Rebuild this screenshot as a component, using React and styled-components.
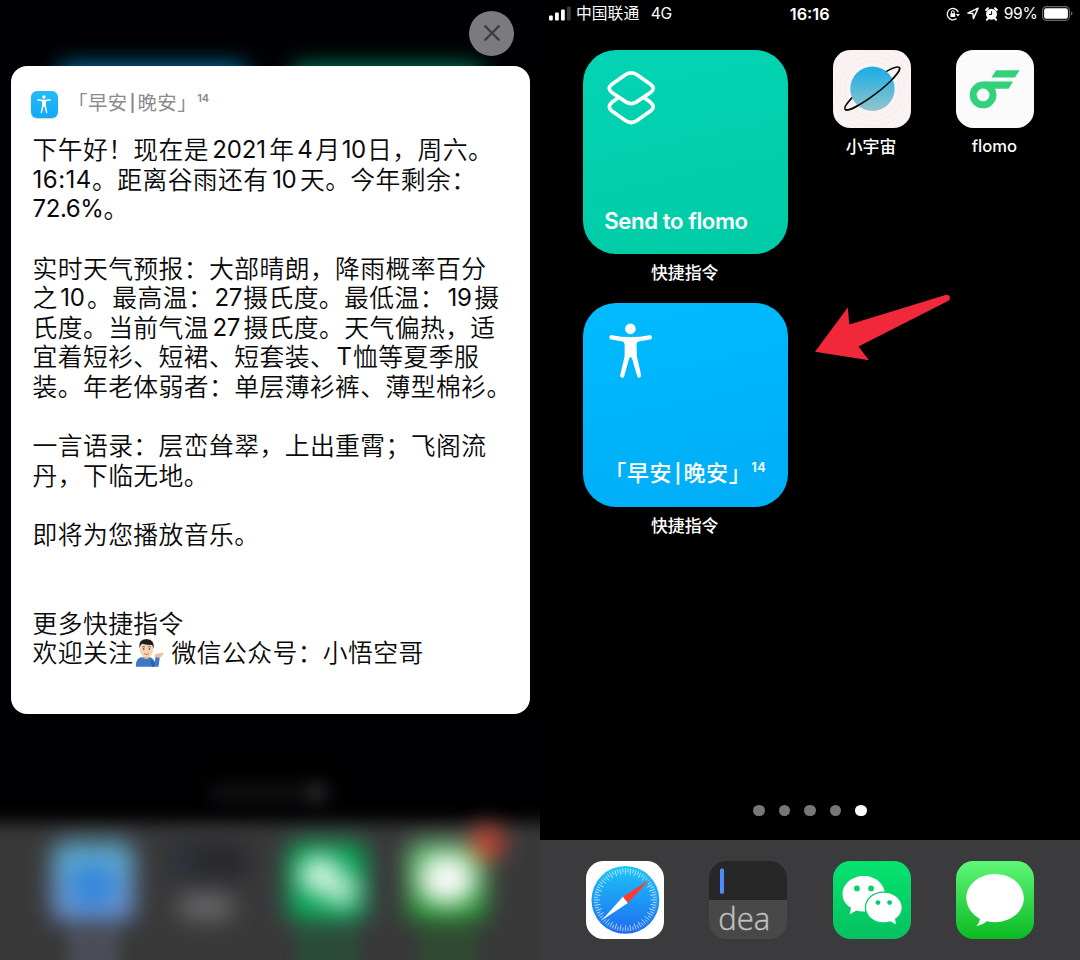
import React from "react";
import styled, { createGlobalStyle } from "styled-components";

const CJK = `"Inter", "Noto Sans CJK SC", sans-serif`;

const GlobalStyle = createGlobalStyle`
  *, *::before, *::after { box-sizing: border-box; }
  body { margin: 0; background: #000; font-family: ${CJK}; }
  svg { display: block; flex: none; }
`;

const Page = styled.main`
  width: 1080px;
  height: 960px;
  display: grid;
  grid-template-columns: 540px 540px;
  overflow: hidden;
  background: #000;
`;

/* ---------- notification phone ---------- */

const AlertPhone = styled.section`
  display: grid;
  height: 960px;
  overflow: hidden;
  & > * { grid-area: 1 / 1; min-width: 0; }
`;

const Backdrop = styled.svg`
  width: 540px;
  height: 960px;
`;

const AlertLayer = styled.div`
  z-index: 1;
  display: flex;
  flex-direction: column;
  align-items: center;
  padding-top: 10.5px;
`;

const CloseButton = styled.button`
  width: 45px;
  height: 45px;
  padding: 0;
  border: 0;
  border-radius: 50%;
  margin: 0 26px 10px auto;
  display: grid;
  place-items: center;
  background: #7b7b7d;
`;

const Card = styled.article`
  width: 519px;
  height: 648.5px;
  border-radius: 16px;
  background: #fff;
  padding: 22px 0 0 22px;
`;

const CardHeader = styled.header`
  display: flex;
  align-items: flex-start;
  height: 30.5px;
  margin-left: -1.5px;
  gap: 10.5px;
`;

const MiniIcon = styled.span`
  width: 26.5px;
  height: 27px;
  border-radius: 6px;
  margin-top: 3.5px;
  display: grid;
  place-items: center;
  background: linear-gradient(#23bdfb, #10a9f5);
  box-shadow: 0 1px 1.5px rgba(0, 0, 0, 0.2);
`;

const ShortcutTitle = styled.span`
  display: flex;
  font-size: ${(p) => p.$size}px;
  font-weight: ${(p) => p.$weight};
  letter-spacing: ${(p) => p.$track}px;
  line-height: 1.45;
  white-space: nowrap;
  color: ${(p) => p.$color};
  font-family: "Noto Sans CJK SC", sans-serif;
`;

const TitleBar = styled.span`
  width: ${(p) => p.$w}px;
  text-align: center;
  letter-spacing: 0;
  font-size: 0.86em;
  font-weight: 600;
  line-height: 1.85;
  font-family: Inter, sans-serif;
`;

const Sup = styled.sup`
  font-family: Inter, sans-serif;
  font-weight: 600;
  letter-spacing: 0;
  font-size: ${(p) => p.$size}px;
  line-height: 1;
  padding-top: ${(p) => p.$top}px;
`;

const Message = styled.div`
  margin-top: 18.2px;
  display: flex;
  flex-direction: column;
`;

const Line = styled.p`
  margin: 0;
  height: 29.6px;
  display: flex;
  align-items: flex-start;
  white-space: nowrap;
  font-family: "Liberation Sans", "Noto Sans CJK SC", sans-serif;
  font-size: 24.8px;
  font-weight: 350;
  line-height: 29.6px;
  letter-spacing: 0.42px;
  color: #0a0a0a;
`;

const Latin = styled.span`
  width: ${(p) => p.$w}px;
  margin-top: -1px;
  text-align: ${(p) => p.$align || "center"};
  font-family: Inter, sans-serif;
  font-size: 24px;
  font-weight: 400;
  letter-spacing: ${(p) => p.$track ?? -0.4}px;
`;

const EmojiSlot = styled.span`
  width: 38.2px;
  padding: 0 0 0 1.4px;
  margin-top: -1.6px;
`;

/* ---------- home-screen phone ---------- */

const HomePhone = styled.section`
  position: relative;
  display: flex;
  flex-direction: column;
  height: 960px;
  color: #fff;
`;

const StatusBar = styled.div`
  height: 28px;
  flex: none;
  display: grid;
  grid-template-columns: 1fr auto 1fr;
  align-items: center;
  padding: 0 7.5px 1px 8.5px;
  font-size: 16px;
`;

const StatusGroup = styled.div`
  display: flex;
  align-items: center;
  justify-content: ${(p) => p.$justify || "flex-start"};
`;

const Carrier = styled.span`
  font-family: "Noto Sans CJK SC", sans-serif;
  font-size: 15.8px;
  line-height: 20px;
  margin: -1px 0 0 4.5px;
`;

const Network = styled.span`
  font-size: 15.6px;
  margin-left: 11.5px;
  letter-spacing: -0.2px;
`;

const Clock = styled.time`
  font-weight: 600;
  font-size: 16.3px;
  margin-right: 1.6px;
`;

const Percent = styled.span`
  font-size: 15.6px;
  letter-spacing: -0.3px;
  margin: 0 4px 0 6px;
`;

const HomeBody = styled.div`
  flex: 1;
  display: flex;
  align-items: flex-start;
  padding: 21.6px 0 0 43.3px;
  gap: 45px;
`;

const WidgetColumn = styled.div`
  display: flex;
  flex-direction: column;
  width: 204.4px;
`;

const WidgetItem = styled.div`
  height: 253.1px;
  display: flex;
  flex-direction: column;
  align-items: center;
`;

const Widget = styled.div`
  width: 204.4px;
  height: 204.5px;
  border-radius: 33px;
  display: flex;
  flex-direction: column;
  justify-content: space-between;
  align-items: flex-start;
  padding: 20px 0 ${(p) => p.$bottom}px 21px;
  background: linear-gradient(168deg, ${(p) => p.$from}, ${(p) => p.$to});
`;

const WidgetGlyph = styled.span`
  margin-left: ${(p) => p.$inset}px;
`;

const WidgetName = styled.span`
  font-size: 22.2px;
  font-weight: 600;
  line-height: 30px;
  letter-spacing: -0.42px;
  white-space: nowrap;
`;

const Label = styled.span`
  font-family: ${(p) => (p.$latin ? "Inter" : `"Noto Sans CJK SC"`)}, sans-serif;
  font-size: ${(p) => (p.$latin ? 16.6 : 16.9)}px;
  font-weight: 500;
  line-height: 24px;
  margin: ${(p) => (p.$latin ? 6.4 : 5.9)}px 1.6px 0 0;
`;

const AppRow = styled.div`
  display: flex;
  gap: 45.2px;
`;

const AppItem = styled.div`
  width: 78.2px;
  display: flex;
  flex-direction: column;
  align-items: center;
`;

const IconTile = styled.span`
  width: 78.2px;
  height: 78.2px;
  border-radius: 17.5px;
  overflow: hidden;
  display: block;
`;

const Pager = styled.div`
  display: flex;
  justify-content: center;
  gap: 14px;
  height: 35.4px;
`;

const Dot = styled.i`
  width: 11.6px;
  height: 11.6px;
  border-radius: 50%;
  background: ${(p) => (p.$active ? "#fff" : "#77777a")};
`;

const Dock = styled.nav`
  height: 120px;
  flex: none;
  display: flex;
  justify-content: space-between;
  padding: 21px 45.6px 0;
  background: #3b3b3d;
`;

const Pointer = styled.svg`
  position: absolute;
  left: 270px;
  top: 288px;
`;

/* ---------- drawings ---------- */

function Person({ w, h }) {
  return (
    <svg width={w} height={h} viewBox="119 430 131 167" preserveAspectRatio="none" fill="#fff">
      <circle cx="183.5" cy="447.5" r="16" />
      <path d="M128 466.500 Q155 472.500 184 472.500 Q213 472.500 240 466.500 Q247 466 248.500 472 Q249 478 243 480 L208 486 Q202 488 202 495 L203 530 L215.500 586 Q216 594 210 595 Q206 595.500 204 590 L189 539 Q184 526 179 539 L165 590 Q163 595.500 158 595 Q151 593 153 586 L166 530 L166 495 Q166 488 160 486 L125 480 Q119 478 120 472 Q121 466 128 466.500Z" />
    </svg>
  );
}

function ShortcutsGlyph() {
  return (
    <svg width="50" height="56" viewBox="606 70 50 56" fill="none" stroke="#fff" strokeWidth="3.7" strokeLinejoin="round">
      <path d="M625.800 74.500 Q631.200 71.400 636.600 74.500 L650.500 84.200 Q656 88.500 650.500 92.500 L636.600 101.900 Q631.200 105.200 625.800 101.900 L611.900 92.500 Q606.600 88.500 611.900 84.200Z" />
      <path d="M618.500 97.500 L611.900 102.300 Q606.600 107 611.900 111 L625.800 120.700 Q631.200 124.300 636.600 120.700 L650.500 111 Q656 107 650.500 102.300 L643.900 97.500" />
    </svg>
  );
}

function PlanetIcon() {
  return (
    <svg width="78.2" height="78.2" viewBox="68 149 234 234">
      <defs>
        <linearGradient id="planet" x2="0" y2="1">
          <stop offset="0.1" stopColor="#22afe3" />
          <stop offset="1" stopColor="#93c5cb" />
        </linearGradient>
      </defs>
      <rect x="68" y="149" width="234" height="234" fill="#f9f3f3" />
      <g fill="none" stroke="#fbe9e7" strokeWidth="2">
        {[82, 97, 112, 128, 144].map((r) => (
          <circle key={r} cx="186" cy="265" r={r} />
        ))}
      </g>
      <g fill="none" stroke="#0b0b0b" strokeWidth="4.800">
        <ellipse cx="185.500" cy="264" rx="102.500" ry="19" transform="rotate(-37.500 185.500 264)" />
        <circle cx="186" cy="265" r="66.500" fill="url(#planet)" stroke="none" />
        <path d="M83 264 A102.500 19 0 0 0 288 264" transform="rotate(-37.500 185.500 264)" />
      </g>
    </svg>
  );
}

function FlomoIcon() {
  return (
    <svg width="78.2" height="78.2" viewBox="439 149 234 234">
      <rect x="439" y="149" width="234" height="234" fill="#fbfbfb" />
      <g fill="#34d17c">
        <path d="M559 209.500H629.500L615.500 231H545Z" />
        <path d="M520 243H609.500L596.500 265H554Z" />
        <circle cx="520" cy="283.500" r="29.500" fill="#fbfbfb" stroke="#34d17c" strokeWidth="21" />
      </g>
    </svg>
  );
}

function SafariIcon() {
  const ticks = Array.from({ length: 72 }, (_, i) => i * 5);
  return (
    <svg width="78.2" height="78.2" viewBox="46.500 213 235 235">
      <defs>
        <linearGradient id="safari" x2="0" y2="1">
          <stop offset="0" stopColor="#1cc5f9" />
          <stop offset="1" stopColor="#1e6cf0" />
        </linearGradient>
      </defs>
      <rect x="46" y="213" width="237" height="235" fill="#fff" />
      <circle cx="165" cy="330" r="102" fill="url(#safari)" />
      <g stroke="#fff" strokeWidth="2.200" opacity="0.85">
        {ticks.map((a) => (
          <line key={a} x1="165" y1="235.500" x2="165" y2={a % 10 ? 247 : 254} transform={`rotate(${a} 165 330)`} />
        ))}
      </g>
      <path d="M94 391 L158 320 L172.500 339Z" fill="#fff" />
      <path d="M238 268.500 L157.500 320.500 L172.500 339.500Z" fill="#ff3b30" />
    </svg>
  );
}

function IdeaIcon() {
  return (
    <svg width="78.2" height="78.2" viewBox="0 0 78.200 78.200">
      <rect width="78.200" height="39" fill="#272728" />
      <rect y="39" width="78.200" height="39.200" fill="#484849" />
      <rect x="11" y="7.500" width="4" height="25.200" rx="1.500" fill="#4c8dfb" />
      <text x="9.200" y="69.500" fontFamily="Open Sans, sans-serif" fontWeight="350" fontSize="31.500" textLength="52" lengthAdjust="spacingAndGlyphs" fill="#c2c2c2" stroke="#c2c2c2" strokeWidth="0.4">
        dea
      </text>
    </svg>
  );
}

function WeChatIcon() {
  return (
    <svg width="78.2" height="78.2" viewBox="68 213 234 234">
      <defs>
        <linearGradient id="wechat" x2="0" y2="1">
          <stop offset="0" stopColor="#05e36f" />
          <stop offset="1" stopColor="#07c160" />
        </linearGradient>
      </defs>
      <rect x="68" y="213" width="234" height="234" fill="url(#wechat)" />
      <path d="M160 258 C195 258 223 282 223 312 C223 342 195 364.500 160 364.500 Q148 364.500 138 361.500 L118 372 L122 353 C105 343 96.500 329 96.500 312 C96.500 282 125 258 160 258Z" fill="#fff" />
      <circle cx="139.500" cy="295" r="8.500" fill="#06d267" />
      <circle cx="182" cy="295" r="8.500" fill="#06d267" />
      <path d="M220 308 C250 308 273.500 327 273.500 352 C273.500 366 266 378 253.500 386 L256.500 402 L239 393.500 Q230 396.500 220 396.500 C190 396.500 167 377 167 352 C167 327 190 308 220 308Z" fill="#fff" stroke="#06ce66" strokeWidth="8" paintOrder="stroke" />
      <circle cx="202.500" cy="337.500" r="7.300" fill="#06ce66" />
      <circle cx="237.500" cy="337.500" r="7.300" fill="#06ce66" />
    </svg>
  );
}

function MessagesIcon() {
  return (
    <svg width="78.2" height="78.2" viewBox="439 213 234 234">
      <defs>
        <linearGradient id="messages" x2="0" y2="1">
          <stop offset="0" stopColor="#5ff779" />
          <stop offset="1" stopColor="#0bba22" />
        </linearGradient>
      </defs>
      <rect x="439" y="213" width="234" height="234" fill="url(#messages)" />
      <path d="M556 252 C604 252 642 284 642 324 C642 365 604 396 556 396 Q543 396 531 393.500 Q518 405 500 407.500 Q509 398 511 386.500 C486 373 470 350 470 324 C470 284 508 252 556 252Z" fill="#fff" />
    </svg>
  );
}

function SignalBars() {
  return (
    <svg width="23" height="15" viewBox="0 0 23 15" fill="#fff">
      <rect x="0" y="9.500" width="3.800" height="5" rx="1" />
      <rect x="6" y="6.500" width="3.800" height="8" rx="1" />
      <rect x="12" y="3.500" width="3.800" height="11" rx="1" />
      <rect x="18" y="0.500" width="3.800" height="14" rx="1" fill="#39393b" />
    </svg>
  );
}

function RotationLockIcon() {
  return (
    <svg width="14" height="14" viewBox="0 0 14 14" fill="none" stroke="#fff" strokeWidth="1.300">
      <path d="M12.300 5.200 A5.700 5.700 0 1 0 10.500 11.600" />
      <path d="M9.800 7.100H14L12 9.600Z" fill="#fff" stroke="none" />
      <rect x="4.400" y="6.300" width="4.800" height="3.700" rx="0.500" fill="#fff" stroke="none" />
      <path d="M5.400 6.500V5.100a1.400 1.400 0 0 1 2.800 0V6.500" strokeWidth="1" />
    </svg>
  );
}

function LocationIcon() {
  return (
    <svg width="12" height="13" viewBox="0 0 12 13" fill="none" stroke="#fff" strokeWidth="1.400" strokeLinejoin="round">
      <path d="M11.100 1.100 L0.900 6.100 L5.900 6.500 L6.400 11.600Z" />
    </svg>
  );
}

function AlarmIcon() {
  return (
    <svg width="13" height="14" viewBox="0 0 13 14">
      <circle cx="6.500" cy="7.200" r="5.500" fill="#fff" />
      <path d="M1.200 3 L3 1.300 M11.800 3 L10 1.300 M3 11.600 L1.900 12.800 M10 11.600 L11.100 12.800" stroke="#fff" strokeWidth="2" strokeLinecap="round" />
      <path d="M6.600 4.200V7.500H4" fill="none" stroke="#000" strokeWidth="1" />
    </svg>
  );
}

function BatteryIcon() {
  return (
    <svg width="31" height="15" viewBox="0 0 31 15">
      <rect x="0.600" y="0.700" width="26.800" height="13.600" rx="3.800" fill="none" stroke="#69696b" strokeWidth="1.200" />
      <rect x="2.100" y="2.200" width="23.800" height="10.600" rx="2.200" fill="#fff" />
      <path d="M28.800 5.200 Q30.500 6 30.500 7.500 Q30.500 9 28.800 9.800Z" fill="#69696b" />
    </svg>
  );
}

function TippingHand() {
  return (
    <svg width="29" height="29" viewBox="390 412 86 87">
      <path d="M392 498 Q391 474 408 470 L436 470 Q447 475 449 486 L451 469 L464 470 L460 498Z" fill="#3f78c4" />
      <path d="M436 478 L440 498 H447 L449 484Z" fill="#2c5fa8" />
      <path d="M414 460H433V471Q423 479 414 471Z" fill="#e8b48e" />
      <ellipse cx="424" cy="446" rx="20" ry="24" fill="#f8d2b4" />
      <path d="M403 443 Q398 416 424 415 Q449 416 445 444 L441 433 Q425 433 410 429 L406 435Z" fill="#1f1d1e" />
      <path d="M412 439q4-3 7 0M429 439q4-3 7 0" fill="none" stroke="#35261e" strokeWidth="2.200" />
      <circle cx="415.500" cy="445" r="2.400" fill="#35261e" />
      <circle cx="432.500" cy="445" r="2.400" fill="#35261e" />
      <path d="M417 459q7 5 14 0" fill="none" stroke="#b3593f" strokeWidth="2.400" />
      <path d="M449 469 Q447 460 454 459 L473 456 Q478 459 472 464 L465 471Z" fill="#f3bf9a" />
    </svg>
  );
}

function BlurredHome() {
  return (
    <Backdrop viewBox="0 0 540 960">
      <defs>
        <filter id="soft" filterUnits="userSpaceOnUse" x="-60" y="0" width="660" height="1060" colorInterpolationFilters="sRGB">
          <feGaussianBlur stdDeviation="11.5" />
        </filter>
        <filter id="dockEdge" filterUnits="userSpaceOnUse" x="-60" y="700" width="660" height="360" colorInterpolationFilters="sRGB">
          <feGaussianBlur stdDeviation="8.5" />
        </filter>
        <filter id="streak" filterUnits="userSpaceOnUse" x="-60" y="700" width="660" height="360" colorInterpolationFilters="sRGB">
          <feGaussianBlur stdDeviation="7 8" />
        </filter>
        <linearGradient id="dimSafari" x2="0" y2="1">
          <stop offset="0" stopColor="#5cb0cc" />
          <stop offset="1" stopColor="#7090d4" />
        </linearGradient>
        <linearGradient id="dimMessages" x2="0" y2="1">
          <stop offset="0" stopColor="#70cc7e" />
          <stop offset="1" stopColor="#1c962b" />
        </linearGradient>
      </defs>
      <rect width="540" height="960" fill="#000002" />
      <g filter="url(#soft)">
        <rect x="60" y="66" width="186" height="100" fill="#0088c2" />
        <rect x="293" y="66" width="188" height="100" fill="#008c70" />
      </g>
      <g filter="url(#dockEdge)">
        <rect x="-60" y="823" width="660" height="220" fill="#39393a" />
        <rect x="208" y="785" width="96" height="16" rx="8" fill="#131314" />
        <circle cx="316" cy="793" r="11" fill="#2c2c2e" />
      </g>
      <g filter="url(#streak)">
        <rect x="67" y="930" width="53" height="90" fill="#4a4d55" />
        <rect x="295" y="930" width="64" height="90" fill="#2c4b3a" />
        <rect x="420" y="930" width="56" height="90" fill="#304b32" />
      </g>
      <g filter="url(#soft)">
        <rect x="52" y="842" width="82" height="80" rx="14" fill="url(#dimSafari)" />
        <circle cx="93" cy="886" r="24" fill="#3487dc" />
        <rect x="170" y="842" width="78" height="39" fill="#28292a" />
        <rect x="179" y="850" width="8" height="25" fill="#31466d" />
        <rect x="181" y="895" width="50" height="23" fill="#6e6e6f" />
        <rect x="287" y="842" width="80" height="80" rx="14" fill="#0aa758" />
        <ellipse cx="320" cy="875" rx="21" ry="19" fill="#d3f7e3" />
        <ellipse cx="341" cy="890" rx="18" ry="16" fill="#b9e9d0" />
        <rect x="407" y="842" width="80" height="80" rx="14" fill="url(#dimMessages)" />
        <ellipse cx="447" cy="880" rx="28" ry="25" fill="#f7faf7" />
        <circle cx="487" cy="843" r="17" fill="#d04431" />
      </g>
    </Backdrop>
  );
}

/* ---------- content ---------- */

const lines = [
  ["下午好！现在是", ["2021", 60.2, "center", -0.1], "年", ["4", 20.8], "月", ["10", 26.6], "日，周六。"],
  [["16:14", 59.5, "left", 0.5], "。距离谷雨还有", ["10", 31.4], "天。今年剩余："],
  [["72.6%", 71, "left", -0.4], "。"],
  [],
  ["实时天气预报：大部晴朗，降雨概率百分"],
  ["之", ["10", 29.4], "。最高温：", ["27", 30], "摄氏度。最低温：", ["19", 29.2], "摄"],
  ["氏度。当前气温", ["27", 34.4], "摄氏度。天气偏热，适"],
  ["宜着短衫、短裙、短套装、", ["T", 18], "恤等夏季服"],
  ["装。年老体弱者：单层薄衫裤、薄型棉衫。"],
  [],
  ["一言语录：层峦耸翠，上出重霄；飞阁流"],
  ["丹，下临无地。"],
  [],
  ["即将为您播放音乐。"],
  [],
  [],
  ["更多快捷指令"],
  ["欢迎关注", "emoji", "微信公众号：小悟空哥"],
];

function Run({ run }) {
  if (run === "emoji") {
    return (
      <EmojiSlot>
        <TippingHand />
      </EmojiSlot>
    );
  }
  if (Array.isArray(run)) {
    return (
      <Latin $w={run[1]} $align={run[2]} $track={run[3]}>
        {run[0]}
      </Latin>
    );
  }
  return <span>{run}</span>;
}

function GreetingTitle({ size, weight, track, color, bar, sup, supTop }) {
  return (
    <ShortcutTitle $size={size} $weight={weight} $track={track} $color={color}>
      <span>「早安</span>
      <TitleBar $w={bar}>|</TitleBar>
      <span>晚安」</span>
      <Sup $size={sup} $top={supTop}>14</Sup>
    </ShortcutTitle>
  );
}

export default function App() {
  return (
    <>
      <GlobalStyle />
      <Page>
        <AlertPhone>
          <BlurredHome />
          <AlertLayer>
            <CloseButton aria-label="关闭">
              <svg width="16" height="16" viewBox="0 0 16 16" stroke="#3c3c3e" strokeWidth="2.300" strokeLinecap="round">
                <path d="M1.300 1.300 14.700 14.700M14.700 1.300 1.300 14.700" />
              </svg>
            </CloseButton>
            <Card>
              <CardHeader>
                <MiniIcon>
                  <Person w={14} h={18.5} />
                </MiniIcon>
                <GreetingTitle size={19.4} weight={400} track={0.5} color="#8a8a8d" bar={9.8} sup={11} supTop={5} />
              </CardHeader>
              <Message>
                {lines.map((runs, i) => (
                  <Line key={i}>
                    {runs.map((run, j) => (
                      <Run key={j} run={run} />
                    ))}
                  </Line>
                ))}
              </Message>
            </Card>
          </AlertLayer>
        </AlertPhone>

        <HomePhone>
          <StatusBar>
            <StatusGroup>
              <SignalBars />
              <Carrier>中国联通</Carrier>
              <Network>4G</Network>
            </StatusGroup>
            <Clock>16:16</Clock>
            <StatusGroup $justify="flex-end">
              <RotationLockIcon />
              <svg width="7" height="1" />
              <LocationIcon />
              <svg width="6" height="1" />
              <AlarmIcon />
              <Percent>99%</Percent>
              <BatteryIcon />
            </StatusGroup>
          </StatusBar>

          <HomeBody>
            <WidgetColumn>
              <WidgetItem>
                <Widget $from="#03d4b4" $to="#00cba5" $bottom={18.5}>
                  <WidgetGlyph $inset={2}><ShortcutsGlyph /></WidgetGlyph>
                  <WidgetName>Send to flomo</WidgetName>
                </Widget>
                <Label>快捷指令</Label>
              </WidgetItem>
              <WidgetItem>
                <Widget $from="#00bbfd" $to="#00adf6" $bottom={16.2}>
                  <WidgetGlyph $inset={5}><Person w={43.5} h={55.5} /></WidgetGlyph>
                  <GreetingTitle size={22} weight={500} track={0.6} color="#fff" bar={11.4} sup={13.2} supTop={5} />
                </Widget>
                <Label>快捷指令</Label>
              </WidgetItem>
            </WidgetColumn>
            <AppRow>
              <AppItem>
                <IconTile><PlanetIcon /></IconTile>
                <Label>小宇宙</Label>
              </AppItem>
              <AppItem>
                <IconTile><FlomoIcon /></IconTile>
                <Label $latin>flomo</Label>
              </AppItem>
            </AppRow>
          </HomeBody>

          <Pager>
            {[0, 1, 2, 3, 4].map((i) => (
              <Dot key={i} $active={i === 4} />
            ))}
          </Pager>
          <Dock>
            <IconTile><SafariIcon /></IconTile>
            <IconTile><IdeaIcon /></IconTile>
            <IconTile><WeChatIcon /></IconTile>
            <IconTile><MessagesIcon /></IconTile>
          </Dock>

          <Pointer width="150" height="80" viewBox="810 288 150 80" fill="#f0283a">
            <path d="M815 351.800 L847.800 307.500 L849.300 324.500 L945.500 295 Q949.500 294.300 950 297.500 Q950 300 948 301 L858.500 346.500 L869 360.200Z" />
          </Pointer>
        </HomePhone>
      </Page>
    </>
  );
}
